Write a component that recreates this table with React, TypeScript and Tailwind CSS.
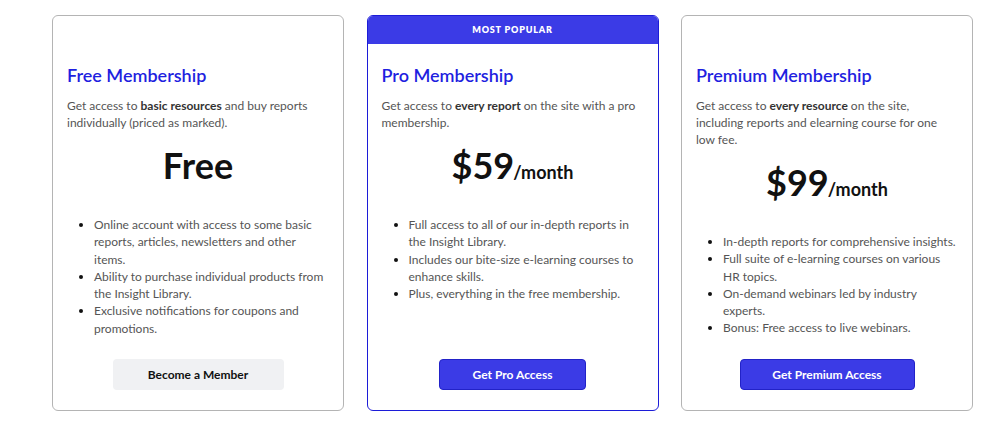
import React from "react";

type Plan = {
  title: string;
  desc: React.ReactNode;
  price: string;
  per?: string;
  items: string[];
  button: string;
  btnW: string;
  popular?: boolean;
  primary?: boolean;
};

const plans: Plan[] = [
  {
    title: "Free Membership",
    desc: (
      <>
        Get access to <b className="font-bold text-[#333]">basic resources</b> and buy reports individually (priced as marked).
      </>
    ),
    price: "Free",
    items: [
      "Online account with access to some basic reports, articles, newsletters and other items.",
      "Ability to purchase individual products from the Insight Library.",
      "Exclusive notifications for coupons and promotions.",
    ],
    button: "Become a Member",
    btnW: "w-[171px]",
  },
  {
    title: "Pro Membership",
    desc: (
      <>
        Get access to <b className="font-bold text-[#333]">every report</b> on the site with a pro membership.
      </>
    ),
    price: "$59",
    per: "/month",
    items: [
      "Full access to all of our in-depth reports in the Insight Library.",
      "Includes our bite-size e-learning courses to enhance skills.",
      "Plus, everything in the free membership.",
    ],
    button: "Get Pro Access",
    btnW: "w-[147px]",
    popular: true,
    primary: true,
  },
  {
    title: "Premium Membership",
    desc: (
      <>
        Get access to <b className="font-bold text-[#333]">every resource</b> on the site, including reports and elearning course for one low fee.
      </>
    ),
    price: "$99",
    per: "/month",
    items: [
      "In-depth reports for comprehensive insights.",
      "Full suite of e-learning courses on various HR topics.",
      "On-demand webinars led by industry experts.",
      "Bonus: Free access to live webinars.",
    ],
    button: "Get Premium Access",
    btnW: "w-[175px]",
    primary: true,
  },
];

function Card({ p }: { p: Plan }) {
  return (
    <div
      className={
        "flex h-[396px] w-[292px] flex-col overflow-hidden rounded-[6px] border bg-white " +
        (p.popular ? "border-[#1c1cd8]" : "border-[#b4b4b4]")
      }
    >
      <div
        className={
          "flex h-[28px] shrink-0 items-center justify-center text-[9px] font-extrabold tracking-[0.09em] text-white " +
          (p.popular ? "bg-[#3b3be6]" : "bg-transparent")
        }
      >
        {p.popular ? "MOST POPULAR" : ""}
      </div>
      <div className="flex flex-1 flex-col px-[14px] pb-[20px] pt-[19px]">
        <h2 className="text-[18px] font-semibold leading-[24px] text-[#1f1fe0]">{p.title}</h2>
        <p className="mt-[10px] text-[12px] leading-[17px] text-[#555]">{p.desc}</p>
        <div className="mt-[16px] flex h-[36px] items-baseline justify-center leading-[36px] text-[#111]">
          <span className="text-[36px] font-bold leading-[36px]">{p.price}</span>
          {p.per && <span className="-ml-[1px] text-[18px] font-bold leading-[36px]">{p.per}</span>}
        </div>
        <ul className="mt-[33px] list-disc pl-[27px] text-[12px] leading-[17.3px] text-[#555] marker:text-[#111]">
          {p.items.map((it) => (
            <li key={it}>{it}</li>
          ))}
        </ul>
        <div className="mt-auto flex justify-center">
          <button
            className={
              p.btnW +
              " h-[31px] rounded-[4px] text-[12px] font-bold " +
              (p.primary
                ? "border border-[#2222c8] bg-[#3b3be6] text-white"
                : "bg-[#f0f1f3] text-[#111]")
            }
          >
            {p.button}
          </button>
        </div>
      </div>
    </div>
  );
}

export default function App() {
  return (
    <div
      className="h-[430px] w-[1000px] bg-white pl-[52px] pt-[15px]"
      style={{ fontFamily: "Lato, 'Noto Sans', sans-serif" }}
    >
      <div className="flex gap-[22.5px]">
        {plans.map((p) => (
          <Card key={p.title} p={p} />
        ))}
      </div>
    </div>
  );
}
